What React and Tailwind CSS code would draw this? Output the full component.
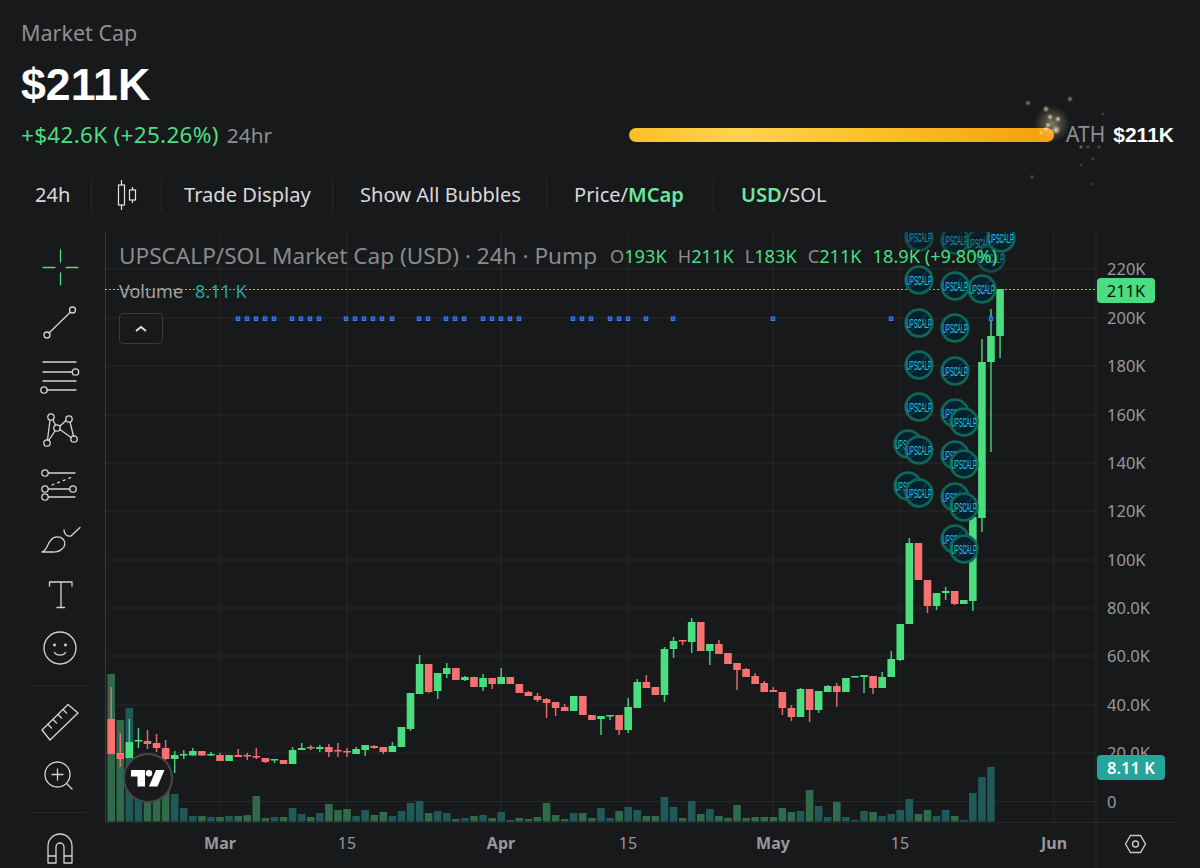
import { Fragment } from 'react'

const UP = '#4ade80'
const DOWN = '#f87171'

// body top, body bottom, wick top, wick bottom, up?, volume top (page pixels)
const CANDLES = [
  [719, 754, 687, 754, 0, 674], [753, 759, 733, 767, 0, 720], [742, 758, 719, 758, 1, 708],
  [740, 741.5, 728, 748, 1, 772], [741, 744, 730, 749, 0, 770], [743, 748, 734, 752, 0, 775],
  [748, 759, 740, 760, 0, 780], [755, 759, 751, 773, 1, 794], [754, 755.5, 750, 759, 1, 808],
  [751, 755.5, 748, 755.5, 1, 816], [751, 755.5, 751, 755.5, 0, 816], [754, 755.5, 752, 756, 1, 817],
  [755, 761, 753, 761, 0, 817], [755, 761, 755, 761, 1, 816], [755, 757, 749, 757, 0, 816],
  [755, 756.5, 753, 760, 0, 815], [756, 757.5, 748, 759, 0, 796], [758, 762, 758, 763, 0, 818],
  [759, 760.5, 759, 763, 1, 817], [760, 764, 760, 764, 0, 817], [750, 764, 747, 764, 1, 808],
  [748, 750, 743, 750, 1, 814], [747, 748.5, 745, 750, 0, 817], [747, 749, 745, 752, 1, 813],
  [747, 752, 744, 757, 0, 804], [750, 751.5, 743, 757, 0, 810], [751, 752.5, 748, 757, 0, 809],
  [749, 754, 747, 754, 1, 816], [745, 750, 745, 756, 1, 810], [746, 748, 745, 749, 0, 815],
  [747, 752, 747, 754, 0, 812], [746, 752, 742, 752, 1, 816], [727, 747, 727, 747, 1, 811],
  [693, 729, 693, 731, 1, 803], [664, 694, 655, 694, 1, 801], [664, 692, 664, 693, 0, 813],
  [673, 691, 673, 699, 1, 811], [668, 674, 663, 678, 1, 813], [668, 680, 668, 680, 0, 819],
  [677, 680, 676, 681, 1, 818], [677, 687, 677, 687, 0, 816], [678, 687, 674, 691, 1, 815],
  [678, 684, 678, 689, 0, 818], [677, 684, 668, 684, 1, 812], [677, 684, 677, 684, 0, 820],
  [684, 693, 684, 693, 0, 818], [692, 696, 691, 696, 0, 819], [696, 700, 693, 702, 0, 817],
  [699, 703, 698, 718, 0, 803], [702, 708, 702, 716, 0, 815], [707, 711, 704, 711, 0, 819],
  [696, 711, 696, 711, 1, 813], [696, 715, 696, 715, 0, 813], [715, 720, 715, 720, 0, 818],
  [716, 719, 716, 735, 1, 808], [715, 716.5, 715, 720, 1, 818], [715, 730, 715, 735, 0, 811],
  [707, 730, 698, 733, 1, 807], [682, 708, 679, 708, 1, 810], [682, 688, 675, 688, 0, 816],
  [687, 695, 687, 695, 0, 816], [649, 695, 647, 702, 1, 797], [641, 649, 637, 658, 1, 807],
  [640, 641.5, 640, 645, 0, 818], [622, 642, 618, 653, 1, 801], [622, 651, 622, 651, 0, 814],
  [644, 651, 644, 665, 1, 809], [644, 654, 640, 654, 0, 816], [653, 664, 653, 664, 0, 818],
  [663, 670, 663, 690, 0, 805], [669, 677, 668, 677, 0, 818], [676, 684, 673, 684, 0, 817],
  [683, 692, 681, 692, 0, 817], [690, 692, 687, 692, 0, 817], [692, 708, 692, 715, 0, 808],
  [708, 717, 705, 721, 0, 812], [689, 717, 688, 717, 1, 811], [689, 710, 689, 722, 0, 790],
  [691, 710, 691, 713, 1, 806], [686, 692, 685, 692, 1, 817], [686, 692, 683, 707, 0, 802],
  [678, 692, 678, 692, 1, 817], [676, 677.5, 676, 677.5, 1, 820], [675, 677, 675, 693, 1, 811],
  [676, 688, 676, 694, 0, 812], [677, 688, 672, 688, 1, 816], [659, 677, 651, 677, 1, 814],
  [624, 660, 624, 661, 1, 810], [543, 624, 538, 624, 1, 799], [543, 580, 543, 580, 0, 814],
  [580, 606, 580, 613, 0, 810], [593, 606, 593, 610, 1, 816], [591, 593, 587, 600, 1, 810],
  [591, 604, 591, 605, 0, 816], [600, 604, 600, 604, 1, 820], [517, 601, 517, 611, 1, 793],
  [362, 518, 339, 532, 1, 777], [336, 362, 309, 452, 1, 767], [289, 336, 289, 358, 1, null],
]

const GRID_Y = [269, 318, 366, 415, 463, 511, 560, 608, 656, 705, 753, 801.5]
const GRID_X = [220, 347, 501, 628, 773, 900, 1054]
const PRICES = ['220K', '200K', '180K', '160K', '140K', '120K', '100K', '80.0K', '60.0K', '40.0K', '20.0K', '0']
const DATES = [['Mar', 220, true], ['15', 347], ['Apr', 501, true], ['15', 628], ['May', 773, true], ['15', 900], ['Jun', 1054, true]]
const DOTS = [238, 247, 256, 265, 274, 292, 301, 310, 319, 346, 355, 364, 373, 382, 392, 419, 428, 446, 455, 464, 483, 492, 501, 510, 519, 573, 582, 591, 610, 619, 628, 646, 673, 773, 891, 991]

// drawn in this order, later ones sit on top
const BUBBLES = [
  [919, 237], [919, 280], [919, 323], [919, 365], [919, 407], [908, 444], [919, 450], [908, 486], [919, 493],
  [955, 240], [955, 286], [955, 328], [955, 371], [955, 413], [964, 422], [955, 455], [964, 464],
  [955, 497], [964, 507], [955, 539], [964, 549],
  [980, 243], [991, 258], [1001, 238], [982, 289],
]

const SPARKS = [
  [1028, 103, 1.6], [1070, 99, 1.6], [1046, 109, 1.8], [1050, 117, 1.6], [1058, 119, 1.6], [1048, 125, 1.5],
  [1056, 130, 2.4], [1041, 133, 1.2], [1046, 129, 1.4], [1103, 114, 1], [1081, 147, 1.2], [1088, 147, 1],
  [1099, 147, 1.2], [1093, 159, 1.1], [1081, 165, 0.9], [1032, 177, 1.4], [1092, 184, 0.9],
]

function Bubble({ x, y }) {
  return (
    <g opacity={y < 260 && x !== 1001 ? 0.65 : 1}>
      <circle cx={x} cy={y} r={13.3} fill="#05202e" stroke="#0f6655" strokeWidth={2.8} />
      <path d={`M${x - 9} ${y + 8}L${x - 2} ${y + 4}L${x + 3} ${y - 4}L${x + 9} ${y - 10}`} fill="none" stroke="#0c4a63" strokeWidth={1} />
      <text x={x} y={y + 4.5} textAnchor="middle" textLength={25} lengthAdjust="spacingAndGlyphs" fontSize={13} fill="#25d0ea" fontFamily="'Liberation Sans', sans-serif">UPSCALP</text>
    </g>
  )
}

function Chart() {
  return (
    <svg className="block w-[1095px] h-[636px]" viewBox="105 232 1095 636">
      {GRID_Y.map((y) => <line key={y} x1={105} x2={1096} y1={y} y2={y} stroke="#27282b" />)}
      {GRID_X.map((x) => <line key={x} x1={x} x2={x} y1={232} y2={822} stroke="#27282b" />)}
      <line x1={105.5} x2={105.5} y1={232} y2={822} stroke="#23443c" />
      <line x1={105} x2={1175} y1={822.5} y2={822.5} stroke="#27282b" />
      <line x1={1096} x2={1096} y1={232} y2={868} stroke="#27282b" />

      {CANDLES.map((c, i) => {
        const x = 111.2 + 9.07 * i
        return c[5] && <rect key={i} x={x - 3.8} y={c[5]} width={7.6} height={821.5 - c[5]} fill={c[4] ? '#1f5a58' : '#2f6b4a'} />
      })}
      {CANDLES.map((c, i) => {
        const x = 111.2 + 9.07 * i
        const color = c[4] ? UP : DOWN
        return (
          <Fragment key={i}>
            <rect x={x - 0.75} y={c[2]} width={1.5} height={c[3] - c[2]} fill={color} opacity={0.9} />
            <rect x={x - 3.8} y={c[0]} width={7.6} height={c[1] - c[0]} fill={color} />
          </Fragment>
        )
      })}

      <line x1={105} x2={1096} y1={289.5} y2={289.5} stroke={UP} strokeWidth={1} strokeDasharray="2 2" />
      {DOTS.map((x) => <rect key={x} x={x - 1.75} y={317} width={3.5} height={3.5} fill="#1d4ed8" stroke="#3b82f6" />)}
      {BUBBLES.map(([x, y]) => <Bubble key={`${x}-${y}`} x={x} y={y} />)}

      <g fontFamily="'Noto Sans', sans-serif" fontSize={16.5} fill="#98989d">
        {PRICES.map((p, i) => <text key={p} x={1107} y={GRID_Y[i] + 6}>{p}</text>)}
        {DATES.map(([d, x, bold]) => <text key={x} x={x} y={849} textAnchor="middle" fontWeight={bold ? 700 : 400} fontSize={16}>{d}</text>)}
      </g>

      <path d="M100 816l-3 5 3 5" fill="none" stroke="#98989d" strokeWidth={1.2} />
      <g fill="none" stroke="#c8c8cc" strokeWidth={1.4}>
        <path d="M1125.5 844l5-8.500h10l5 8.500-5 8.500h-10z" />
        <circle cx={1135.5} cy={844} r={3} />
      </g>
    </svg>
  )
}

function Icon({ cy, children }) {
  return (
    <svg className="w-11 h-11" viewBox={`38 ${cy - 22} 44 44`} fill="none" stroke="#d4d4d8" strokeWidth={1.3} strokeLinecap="round" strokeLinejoin="round" overflow="visible">
      {children}
    </svg>
  )
}

function Sidebar() {
  return (
    <div className="w-[105px] shrink-0 pt-2 flex flex-col text-white">
      <div className="h-[54.4px] pl-[38px] flex items-center">
        <Icon cy={267}>
          <path d="M43 267.500h12M66 267.500h12M60.500 250v12M60.500 273v12" stroke={UP} />
        </Icon>
      </div>
      <div className="h-[54.4px] pl-[38px] flex items-center">
        <Icon cy={321}>
          <circle cx={72.5} cy={309} r={3} />
          <circle cx={47} cy={334} r={3} />
          <path d="M70 311.500L49 332" />
        </Icon>
      </div>
      <div className="h-[54.4px] pl-[38px] flex items-center">
        <Icon cy={375}>
          <path d="M43 361h33M43 371h29M43 380h33M47 389h29" />
          <circle cx={75.5} cy={371} r={3.2} />
          <circle cx={44} cy={389} r={3.2} />
        </Icon>
      </div>
      <div className="h-[54.4px] pl-[38px] flex items-center">
        <Icon cy={430}>
          <circle cx={51} cy={417} r={3.2} />
          <circle cx={69} cy={419} r={3.2} />
          <circle cx={57} cy={428} r={3.2} />
          <circle cx={47} cy={443} r={3.2} />
          <circle cx={74} cy={439} r={3.2} />
          <path d="M50 420L47.500 440M53 420L55.500 425M66 420.500L60 426M49 440L55 431M60 429.500L71 437.500M70 422L73.500 436" />
        </Icon>
      </div>
      <div className="h-[54.4px] pl-[38px] flex items-center">
        <Icon cy={485}>
          <path d="M48.500 473H75M48.500 489H69.500M48.500 497H75" />
          <path d="M52 485L72 477" strokeDasharray="2 4" />
          <circle cx={45} cy={473} r={3.2} />
          <circle cx={45} cy={489} r={3.2} />
          <circle cx={73} cy={489} r={3.2} />
          <circle cx={45} cy={497} r={3.2} />
        </Icon>
      </div>
      <div className="h-[54.4px] pl-[38px] flex items-center">
        <Icon cy={539}>
          <path d="M42 552C47 551 47 544 51 540C54 536 60 536 63 539C66 542 65 547 62 549C60 551 57 552 53 552Z" />
          <path d="M64 530C64 534 67 537 71 536L80 527.500" />
        </Icon>
      </div>
      <div className="h-[54.4px] pl-[38px] flex items-center">
        <Icon cy={593}>
          <path d="M49.500 585v-4h22.500v4M61 581v25.500M57 606.500h7.500" />
        </Icon>
      </div>
      <div className="h-[54.4px] pl-[38px] flex items-center">
        <Icon cy={648}>
          <circle cx={60} cy={648} r={16} />
          <circle cx={54.5} cy={645} r={0.8} fill="#d4d4d8" />
          <circle cx={65.5} cy={645} r={0.8} fill="#d4d4d8" />
          <path d="M54.500 652.500C56.500 656 63.500 656 65.500 652.500" />
        </Icon>
      </div>
      <div className="w-[55px] ml-[32px] h-px bg-[#26272a] mt-[10px]" />
      <div className="h-[53px] mt-[9px] pl-[38px] flex items-center">
        <Icon cy={722}>
          <path d="M42 730L68 704.500L78 713L50 740Z" />
          <path d="M48 724.500L51.500 728M53 719.500L56.500 723M58 714.500L61.500 718M63 709.500L66.500 713" />
        </Icon>
      </div>
      <div className="h-[53px] pl-[38px] flex items-center">
        <Icon cy={775}>
          <circle cx={57.5} cy={774.5} r={12.5} />
          <path d="M57.500 769v11M52 774.500h11M67 784l5 5" />
        </Icon>
      </div>
      <div className="w-[55px] ml-[32px] h-px bg-[#26272a] mt-[11px]" />
      <div className="h-9 mt-[18px] pl-[38px] flex items-center">
        <Icon cy={850}>
          <path d="M48 864V847A12 12 0 0 1 72 847V864H64V848A4 4 0 0 0 56 848V864ZM48 857H56M64 857H72" />
        </Icon>
      </div>
    </div>
  )
}

export default function App() {
  return (
    <div className="relative w-[1200px] h-[868px] overflow-hidden bg-[#18191b] text-white font-['Noto_Sans',sans-serif]">
      {/* Header */}
      <div className="h-[175px] pl-[21px] pr-[26px]">
        <div className="pt-[19px] text-[21.5px] leading-7 text-[#8e8f94]">Market Cap</div>
        <div className="mt-[14px] text-[44.7px] leading-12 font-bold font-['Liberation_Sans',sans-serif]">$211K</div>
        <div className="mt-[10px] flex items-center justify-between">
          <div className="flex items-baseline gap-2 leading-7">
            <span className="text-[22.5px] tracking-[0.3px] text-[#4ade80]">+$42.6K (+25.26%)</span>
            <span className="text-[20.8px] text-[#8e8f94]">24hr</span>
          </div>
          <div className="flex items-center">
            <div className="w-[425px] h-[14px] rounded-full bg-[linear-gradient(90deg,#fbbf24_0%,#ffd34f_25%,#fbbf24_60%,#f59e0b_100%)]" />
            <span className="ml-3 text-[21px] text-[#8e8f94]">ATH</span>
            <span className="ml-[8px] text-[21px] font-bold font-['Liberation_Sans',sans-serif]">$211K</span>
          </div>
        </div>
      </div>

      {/* Toolbar */}
      <div className="h-10 flex items-center text-[20.1px] text-[#d8d8dc]">
        <div className="w-[92px] pl-[35px] border-r border-[#26272a] h-[34px] flex items-center">24h</div>
        <div className="w-[70px] border-r border-[#26272a] h-[34px] flex items-center justify-center">
          <svg className="w-6 h-9" viewBox="0 0 24 36" fill="none" stroke="#e4e4e7" strokeWidth={1.2}>
            <path d="M6.500 3v30M17.500 10v16" />
            <rect x={3.5} y={8} width={6} height={20} fill="#18191b" />
            <rect x={14.5} y={13} width={6} height={10} fill="#18191b" />
          </svg>
        </div>
        <div className="w-[171px] pl-[22px] border-r border-[#26272a] h-[34px] flex items-center">Trade Display</div>
        <div className="w-[214px] pl-[27px] border-r border-[#26272a] h-[34px] flex items-center">Show All Bubbles</div>
        <div className="w-[167px] pl-[27px] border-r border-[#26272a] h-[34px] flex items-center">
          Price/<span className="font-semibold text-[#6ee7a0]">MCap</span>
        </div>
        <div className="pl-[27px] flex items-center">
          <span className="font-semibold text-[#6ee7a0]">USD</span>/SOL
        </div>
      </div>

      <div className="mt-[17px] flex">
        <Sidebar />
        <div className="relative">
          <Chart />

          {/* Legend */}
          <div className="absolute left-[14px] top-[8px] flex items-center whitespace-nowrap leading-8">
            <span className="w-[491px] text-[22.6px] text-[#8a8a90]">UPSCALP/SOL Market Cap (USD) · 24h · Pump</span>
            <span className="flex gap-[11px] text-[18.2px] text-[#4ade80]">
              <span><span className="text-[#8a8a90]">O</span>193K</span>
              <span><span className="text-[#8a8a90]">H</span>211K</span>
              <span><span className="text-[#8a8a90]">L</span>183K</span>
              <span><span className="text-[#8a8a90]">C</span>211K</span>
              <span>18.9K (+9.80%)</span>
            </span>
          </div>
          <div className="absolute left-[14px] top-[47px] flex gap-3 text-[18px] leading-6 whitespace-nowrap">
            <span className="text-[#a0a0a5]">Volume</span>
            <span className="text-[#26a69a]">8.11 K</span>
          </div>
          <div className="absolute left-[14px] top-[81px] w-[44px] h-[31px] rounded border border-[#3a3b3e] flex items-center justify-center">
            <svg className="w-4 h-4" viewBox="0 0 16 16" fill="none" stroke="#e4e4e7" strokeWidth={1.8}>
              <path d="M3 10l5-4 5 4" />
            </svg>
          </div>

          {/* Price tags */}
          <div className="absolute left-[992px] top-[46px] w-[58px] h-[25px] rounded-sm bg-[#4ade80] text-[#0b0f0c] text-[16.5px] leading-[25px] text-center">211K</div>
          <div className="absolute left-[992px] top-[523px] w-[68px] h-[25px] rounded-sm bg-[#26a69a] text-white font-semibold text-[16.5px] leading-[25px] text-center">8.11 K</div>

          {/* TradingView badge */}
          <div className="absolute left-[18px] top-[521px] w-[50px] h-[50px] rounded-full bg-[#1a1a1c] border-2 border-[#47474b] flex items-center justify-center">
            <svg className="w-[34px] h-[17px]" viewBox="0 0 34 17" fill="#fff">
              <path d="M0 0h14v16.500h-7.500v-10h-6.500z" />
              <circle cx={18} cy={3.2} r={3.2} />
              <path d="M25 0h8.500l-7 16.500h-8.500z" />
            </svg>
          </div>
        </div>
      </div>

      {/* Sparkles at the end of the ATH bar */}
      <svg className="absolute left-[1000px] top-[80px] w-[140px] h-[120px] pointer-events-none" viewBox="1000 80 140 120">
        <defs>
          <radialGradient id="spark">
            <stop offset="0%" stopColor="#fff6dc" stopOpacity={1} />
            <stop offset="35%" stopColor="#fde8b0" stopOpacity={0.6} />
            <stop offset="100%" stopColor="#fde8b0" stopOpacity={0} />
          </radialGradient>
        </defs>
        <circle cx={1052} cy={124} r={18} fill="url(#spark)" opacity={0.45} />
        {SPARKS.map(([x, y, r]) => (
          <circle key={`${x}-${y}`} cx={x} cy={y} r={r * 2} fill="url(#spark)" opacity={Math.max(0.3, 1 - Math.hypot(x - 1054, y - 125) / 70)} />
        ))}
      </svg>
    </div>
  )
}
